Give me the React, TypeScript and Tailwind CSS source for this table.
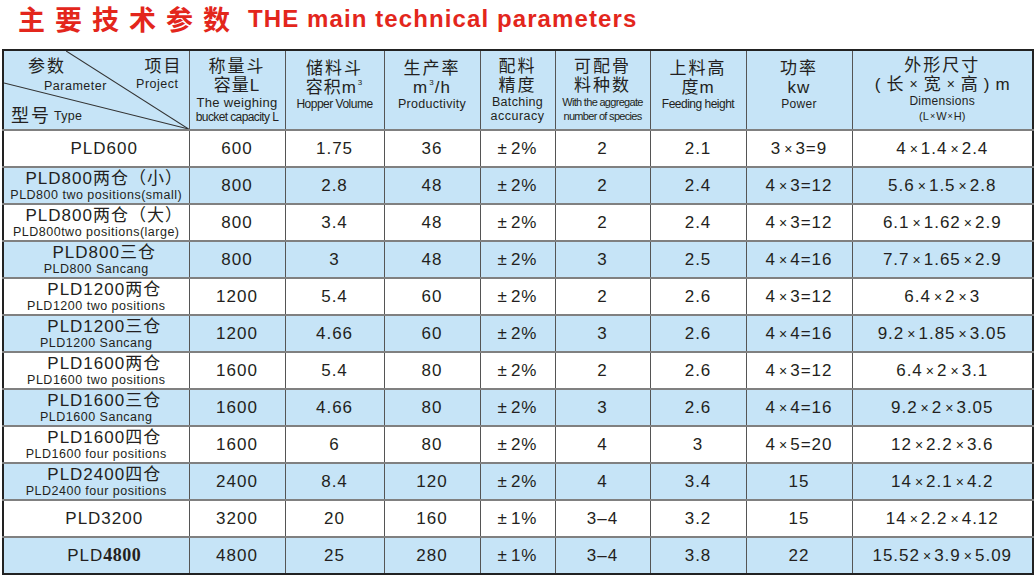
import React from "react";

const BLUE = "bg-[#c6e4f7]";

type Row = {
  cn: string;
  en?: string;
  serifTail?: boolean;
  v: string[];
};

const rows: Row[] = [
  { cn: "PLD600", v: ["600", "1.75", "36", "±2%", "2", "2.1", "3×3=9", "4×1.4×2.4"] },
  { cn: "PLD800两仓（小）", en: "PLD800 two positions(small)", v: ["800", "2.8", "48", "±2%", "2", "2.4", "4×3=12", "5.6×1.5×2.8"] },
  { cn: "PLD800两仓（大）", en: "PLD800two positions(large)", v: ["800", "3.4", "48", "±2%", "2", "2.4", "4×3=12", "6.1×1.62×2.9"] },
  { cn: "PLD800三仓", en: "PLD800 Sancang", v: ["800", "3", "48", "±2%", "3", "2.5", "4×4=16", "7.7×1.65×2.9"] },
  { cn: "PLD1200两仓", en: "PLD1200 two positions", v: ["1200", "5.4", "60", "±2%", "2", "2.6", "4×3=12", "6.4×2×3"] },
  { cn: "PLD1200三仓", en: "PLD1200 Sancang", v: ["1200", "4.66", "60", "±2%", "3", "2.6", "4×4=16", "9.2×1.85×3.05"] },
  { cn: "PLD1600两仓", en: "PLD1600 two positions", v: ["1600", "5.4", "80", "±2%", "2", "2.6", "4×3=12", "6.4×2×3.1"] },
  { cn: "PLD1600三仓", en: "PLD1600 Sancang", v: ["1600", "4.66", "80", "±2%", "3", "2.6", "4×4=16", "9.2×2×3.05"] },
  { cn: "PLD1600四仓", en: "PLD1600 four positions", v: ["1600", "6", "80", "±2%", "4", "3", "4×5=20", "12×2.2×3.6"] },
  { cn: "PLD2400四仓", en: "PLD2400 four positions", v: ["2400", "8.4", "120", "±2%", "4", "3.4", "15", "14×2.1×4.2"] },
  { cn: "PLD3200", v: ["3200", "20", "160", "±1%", "3–4", "3.2", "15", "14×2.2×4.12"] },
  { cn: "PLD", serifTail: true, v: ["4800", "25", "280", "±1%", "3–4", "3.8", "22", "15.52×3.9×5.09"] },
];

const widths = [186, 96, 99, 96, 75, 95, 96, 106, 181];

const font = "font-['Liberation_Sans','Noto_Sans_CJK_SC',sans-serif]";

function Sup3() {
  return <span className="inline-block text-[8px] leading-none align-top relative top-[1px] ml-[1px]">3</span>;
}

function Val({ v }: { v: string }) {
  const parts: React.ReactNode[] = [];
  let buf = "";
  let k = 0;
  for (const ch of v) {
    if (ch === "×") {
      if (buf) parts.push(<span key={k++}>{buf}</span>);
      buf = "";
      parts.push(
        <span key={k++} className="inline-block text-[14px] mx-[3px] tracking-normal">
          ×
        </span>
      );
    } else if (ch === "±") {
      parts.push(
        <span key={k++} className="inline-block mr-[4px] tracking-normal">
          ±
        </span>
      );
    } else {
      buf += ch;
    }
  }
  if (buf) parts.push(<span key={k++}>{buf}</span>);
  return <>{parts}</>;
}

export default function App() {
  return (
    <div className={`w-[1035px] h-[581px] bg-white overflow-hidden ${font} text-[#231f20]`}>
      <div className="h-[49px] flex items-start pt-[4px] pl-[18px]">
        <span className="text-[#e3261c] font-bold text-[27px] leading-[30px] tracking-[10px] font-['Noto_Sans_CJK_SC',sans-serif]">
          主要技术参数
        </span>
        <span className="text-[#e3261c] font-bold text-[24px] leading-[30px] tracking-[1.1px] ml-[8px] font-['Liberation_Sans',sans-serif]">
          THE main technical parameters
        </span>
      </div>
      <div className="pl-[2px]">
        <table className="table-fixed border-collapse border-2 border-[#222] w-[1030px]">
          <colgroup>
            {widths.map((w, i) => (
              <col key={i} style={{ width: w }} />
            ))}
          </colgroup>
          <thead>
            <tr className={`${BLUE} h-[78px]`}>
              <th className="relative p-0 border-r border-[#555] font-normal align-top">
                <svg className="absolute inset-0 w-full h-full" viewBox="0 0 184 78" preserveAspectRatio="none">
                  <line x1="62" y1="0" x2="184" y2="78" stroke="#333" strokeWidth="1" />
                  <line x1="0" y1="32" x2="184" y2="78" stroke="#333" strokeWidth="1" />
                </svg>
                <div className="relative flex flex-col h-[78px]">
                  <div className="flex justify-between pl-[24px] pr-[6px] pt-[6px] text-[17px] leading-[20px] tracking-[2px]">
                    <span>参数</span>
                    <span>项目</span>
                  </div>
                  <div className="flex justify-between pl-[40px] pr-[10px] pt-[2px] text-[12.5px] leading-[15px] tracking-[0.5px]">
                    <span>Parameter</span>
                    <span className="relative top-[-2px]">Project</span>
                  </div>
                  <div className="flex items-end pl-[7px] pt-[11px] text-[18px] leading-[22px]">
                    <span className="tracking-[2px]">型号</span>
                    <span className="text-[12.5px] ml-[3px] tracking-[0.3px]">Type</span>
                  </div>
                </div>
              </th>
              <th className="p-0 border-r border-[#555] font-normal">
                <div className="flex flex-col items-center">
                  <span className="text-[17px] leading-[19px] tracking-[2px]">称量斗</span>
                  <span className="text-[17px] leading-[19px] tracking-[1px]">容量L</span>
                  <span className="text-[13px] leading-[15px] tracking-[0.3px] whitespace-nowrap">The weighing</span>
                  <span className="text-[12px] leading-[14px] tracking-[-0.6px] whitespace-nowrap">bucket capacity L</span>
                </div>
              </th>
              <th className="p-0 border-r border-[#555] font-normal">
                <div className="flex flex-col items-center pb-[10px]">
                  <span className="text-[17px] leading-[19px] tracking-[2px]">储料斗</span>
                  <span className="text-[17px] leading-[19px] tracking-[1px]">容积m<Sup3 /></span>
                  <span className="text-[12px] leading-[15px] tracking-[-0.5px] whitespace-nowrap">Hopper Volume</span>
                </div>
              </th>
              <th className="p-0 border-r border-[#555] font-normal">
                <div className="flex flex-col items-center pb-[10px]">
                  <span className="text-[17px] leading-[19px] tracking-[2px]">生产率</span>
                  <span className="text-[17px] leading-[19px] tracking-[1px]">m<Sup3 />/h</span>
                  <span className="text-[12.5px] leading-[15px] tracking-[0.3px]">Productivity</span>
                </div>
              </th>
              <th className="p-0 border-r border-[#555] font-normal">
                <div className="flex flex-col items-center">
                  <span className="text-[17px] leading-[19px] tracking-[2px]">配料</span>
                  <span className="text-[17px] leading-[19px] tracking-[2px]">精度</span>
                  <span className="text-[12.5px] leading-[14px] tracking-[0.3px]">Batching</span>
                  <span className="text-[12.5px] leading-[14px] tracking-[0.5px]">accuracy</span>
                </div>
              </th>
              <th className="p-0 border-r border-[#555] font-normal">
                <div className="flex flex-col items-center">
                  <span className="text-[17px] leading-[19px] tracking-[2px]">可配骨</span>
                  <span className="text-[17px] leading-[19px] tracking-[2px]">料种数</span>
                  <span className="text-[11px] leading-[14px] tracking-[-0.7px] whitespace-nowrap">With the aggregate</span>
                  <span className="text-[11px] leading-[14px] tracking-[-0.7px] whitespace-nowrap">number of species</span>
                </div>
              </th>
              <th className="p-0 border-r border-[#555] font-normal">
                <div className="flex flex-col items-center pb-[10px]">
                  <span className="text-[17px] leading-[19px] tracking-[2px]">上料高</span>
                  <span className="text-[17px] leading-[19px] tracking-[1px]">度m</span>
                  <span className="text-[12px] leading-[15px] tracking-[-0.5px] whitespace-nowrap">Feeding height</span>
                </div>
              </th>
              <th className="p-0 border-r border-[#555] font-normal">
                <div className="flex flex-col items-center pb-[10px]">
                  <span className="text-[17px] leading-[19px] tracking-[2px]">功率</span>
                  <span className="text-[17px] leading-[19px] tracking-[1px]">kw</span>
                  <span className="text-[12px] leading-[15px] tracking-[0.3px]">Power</span>
                </div>
              </th>
              <th className="p-0 font-normal">
                <div className="flex flex-col items-center pb-[2px]">
                  <span className="text-[17px] leading-[19px] tracking-[2px]">外形尺寸</span>
                  <span className="text-[17px] leading-[19px] whitespace-nowrap flex items-center gap-[6px]">
                    <span>(</span>
                    <span>长</span>
                    <span className="text-[14px]">×</span>
                    <span>宽</span>
                    <span className="text-[14px]">×</span>
                    <span>高</span>
                    <span>)</span>
                    <span>m</span>
                  </span>
                  <span className="text-[12px] leading-[15px] tracking-[0.3px]">Dimensions</span>
                  <span className="text-[11px] leading-[14px] flex items-center gap-[1px]">
                    <span>(L</span>
                    <span className="text-[9px]">×</span>
                    <span>W</span>
                    <span className="text-[9px]">×</span>
                    <span>H)</span>
                  </span>
                </div>
              </th>
            </tr>
          </thead>
          <tbody>
            {rows.map((r, i) => (
              <tr key={i} className={`h-[37px] border-t-2 border-[#808080] ${i % 2 === 1 ? BLUE : "bg-white"}`}>
                <td className="p-0 border-r border-[#555]">
                  <div className="flex flex-col items-center justify-center">
                    <span className="text-[17px] leading-[18px] tracking-[1px] whitespace-nowrap pl-[16px]">
                      {r.cn}
                      {r.serifTail && (
                        <span className="font-['Liberation_Serif',serif] font-bold text-[18px] tracking-[0.5px]">4800</span>
                      )}
                    </span>
                    {r.en && (
                      <span className="text-[12.5px] leading-[14px] tracking-[0.5px] whitespace-nowrap">{r.en}</span>
                    )}
                  </div>
                </td>
                {r.v.map((v, j) => (
                  <td
                    key={j}
                    className={`p-0 text-center text-[17px] tracking-[1px] whitespace-nowrap ${j < 7 ? "border-r border-[#555]" : ""}`}
                  >
                    <Val v={v} />
                  </td>
                ))}
              </tr>
            ))}
          </tbody>
        </table>
      </div>
    </div>
  );
}
